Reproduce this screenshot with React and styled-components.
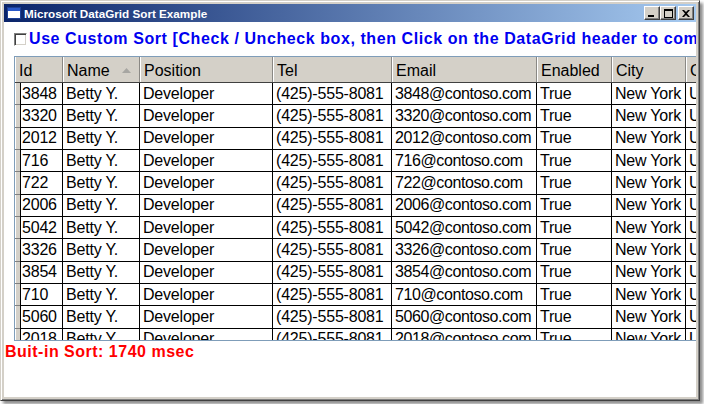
import React from 'react';
import styled, { createGlobalStyle } from 'styled-components';

const GlobalStyle = createGlobalStyle`
  html, body {
    margin: 0;
    padding: 0;
    background: #ffffff;
  }
  body {
    width: 704px;
    height: 404px;
    overflow: hidden;
    font-family: "Liberation Sans", Arial, sans-serif;
  }
`;

const ids = [3848, 3320, 2012, 716, 722, 2006, 5042, 3326, 3854, 710, 5060, 2018];

const columns = [
    { key: 'id', title: 'Id', width: 43 },
    { key: 'name', title: 'Name', width: 77, sorted: true },
    { key: 'position', title: 'Position', width: 133 },
    { key: 'tel', title: 'Tel', width: 119 },
    { key: 'email', title: 'Email', width: 145, tight: true },
    { key: 'enabled', title: 'Enabled', width: 75 },
    { key: 'city', title: 'City', width: 74 },
    { key: 'country', title: 'Country', width: 100 },
];

const rows = ids.map((id) => ({
    id,
    name: 'Betty Y.',
    position: 'Developer',
    tel: '(425)-555-8081',
    email: `${id}@contoso.com`,
    enabled: 'True',
    city: 'New York',
    country: 'USA',
}));

const App = () => {
    return (
        <>
            <GlobalStyle />
            <Window>
                <TitleBar>
                    <TitleIcon width="16" height="14" viewBox="0 0 16 14">
                        <rect x="1.5" y="1.5" width="13" height="11" fill="#ffffff" stroke="#1c3f94" />
                        <rect x="2" y="2" width="12" height="3" fill="#2a58c8" />
                    </TitleIcon>
                    <Title>Microsoft DataGrid Sort Example</Title>
                    <Controls>
                        <CaptionButton>
                            <svg width="8" height="7" viewBox="0 0 8 7">
                                <rect x="0" y="5" width="6" height="2" fill="#000" />
                            </svg>
                        </CaptionButton>
                        <CaptionButton>
                            <svg width="9" height="9" viewBox="0 0 9 9">
                                <rect x="0.5" y="0.5" width="8" height="8" fill="none" stroke="#000" />
                                <rect x="0" y="0" width="9" height="2" fill="#000" />
                            </svg>
                        </CaptionButton>
                        <CaptionButton $close>
                            <svg width="8" height="7" viewBox="0 0 8 7">
                                <path d="M0 0 L2 0 L4 2 L6 0 L8 0 L5 3.5 L8 7 L6 7 L4 5 L2 7 L0 7 L3 3.5 Z" fill="#000" />
                            </svg>
                        </CaptionButton>
                    </Controls>
                </TitleBar>
                <Client>
                    <CheckRow>
                        <CheckBox />
                        <CheckLabel>
                            Use Custom Sort [Check / Uncheck box, then Click on the DataGrid header to compare the sort times]
                        </CheckLabel>
                    </CheckRow>
                    <Grid>
                        <HeaderRow>
                            {columns.map((col, index) => (
                                <HeaderCell key={col.key} $width={index === 0 ? col.width + 5 : col.width}>
                                    <span>{col.title}</span>
                                    {col.sorted ? (
                                        <SortArrow width="9" height="5" viewBox="0 0 9 5">
                                            <polygon points="4.5,0 9,5 0,5" fill="#a7a6a2" />
                                        </SortArrow>
                                    ) : null}
                                </HeaderCell>
                            ))}
                        </HeaderRow>
                        {rows.map((row) => (
                            <Row key={row.id}>
                                <RowHeader />
                                {columns.map((col, index) => (
                                    <Cell key={col.key} $width={col.width} $first={index === 0} $tight={col.tight}>
                                        {row[col.key]}
                                    </Cell>
                                ))}
                            </Row>
                        ))}
                    </Grid>
                    <Result>Buit-in Sort: 1740 msec</Result>
                </Client>
            </Window>
        </>
    );
}

const Window = styled.div`
    width: 700px;
    height: 401px;
    box-sizing: border-box;
    background: #d4d0c8;
    border: 1px solid;
    border-color: #d4d0c8 #404040 #404040 #d4d0c8;
    box-shadow: inset 1px 1px #ffffff, inset -1px -1px #808080, 3px 3px 3px rgba(0, 0, 0, 0.45);
    padding: 3px;
    display: flex;
    flex-direction: column;
`

const TitleBar = styled.div`
    height: 18px;
    flex: none;
    display: flex;
    align-items: center;
    padding: 0 2px;
    background: linear-gradient(to right, #0a246a, #a6caf0);
`

const TitleIcon = styled.svg`
    flex: none;
    margin-right: 2px;
`

const Title = styled.div`
    color: #ffffff;
    font-family: "Liberation Sans", Arial, sans-serif;
    font-weight: bold;
    font-size: 11.7px;
    white-space: nowrap;
`

const Controls = styled.div`
    margin-left: auto;
    display: flex;
`

const CaptionButton = styled.div`
    width: 16px;
    height: 14px;
    box-sizing: border-box;
    margin-left: ${(p) => (p.$close ? '2px' : '0')};
    background: #d4d0c8;
    border: 1px solid;
    border-color: #ffffff #404040 #404040 #ffffff;
    box-shadow: inset -1px -1px #808080;
    display: flex;
    align-items: center;
    justify-content: center;
`

const Client = styled.div`
    flex: 1;
    background: #ffffff;
    overflow: hidden;
    display: flex;
    flex-direction: column;
`

const CheckRow = styled.div`
    height: 18px;
    margin: 8px 0 0 10px;
    display: flex;
    align-items: center;
    gap: 2px;
    white-space: nowrap;
`

const CheckBox = styled.div`
    width: 13px;
    height: 13px;
    flex: none;
    box-sizing: border-box;
    background: #ffffff;
    border: 1px solid;
    border-color: #808080 #ffffff #ffffff #808080;
    box-shadow: inset 1px 1px #404040, inset -1px -1px #d4d0c8;
`

const CheckLabel = styled.span`
    color: #0000f0;
    font-weight: bold;
    font-size: 16px;
    line-height: 18px;
    letter-spacing: 0.58px;
`

const Grid = styled.div`
    flex: none;
    width: 700px;
    height: 285px;
    box-sizing: border-box;
    margin: 8px 0 0 10px;
    border: 1px solid #7f9db9;
    overflow: hidden;
    color: #000000;
    font-size: 16px;
`

const HeaderRow = styled.div`
    display: flex;
    height: 26px;
    box-sizing: border-box;
    background: #d4d0c8;
    border-bottom: 1px solid #404040;
`

const HeaderCell = styled.div`
    width: ${(p) => p.$width}px;
    flex: none;
    box-sizing: border-box;
    display: flex;
    align-items: center;
    justify-content: space-between;
    padding: 2px 0 0 4px;
    border-right: 1px solid #8a8884;
    box-shadow: inset 1px 0 #ffffff;
    white-space: nowrap;
    overflow: hidden;
`

const SortArrow = styled.svg`
    flex: none;
    margin-right: 8px;
    margin-bottom: 1px;
`

const Row = styled.div`
    display: flex;
    height: 22.35px;
    flex: none;
`

const RowHeader = styled.div`
    width: 5px;
    flex: none;
    box-sizing: border-box;
    background: #d4d0c8;
    border-bottom: 1px solid #808080;
    box-shadow: inset 1px 0 #ffffff;
`

const Cell = styled.div`
    width: ${(p) => p.$width}px;
    flex: none;
    box-sizing: border-box;
    border-right: 1px solid #000000;
    border-bottom: 1px solid #000000;
    border-left: ${(p) => (p.$first ? '1px solid #000000' : 'none')};
    padding-left: ${(p) => (p.$first ? '1px' : '3px')};
    letter-spacing: ${(p) => (p.$tight ? '-0.4px' : '-0.2px')};
    display: flex;
    align-items: center;
    white-space: nowrap;
    overflow: hidden;
`

const Result = styled.div`
    margin-top: 2px;
    padding-left: 1px;
    color: #ff0000;
    font-weight: bold;
    font-size: 16px;
    line-height: 18px;
    letter-spacing: 0.5px;
    white-space: nowrap;
`

export default App;
